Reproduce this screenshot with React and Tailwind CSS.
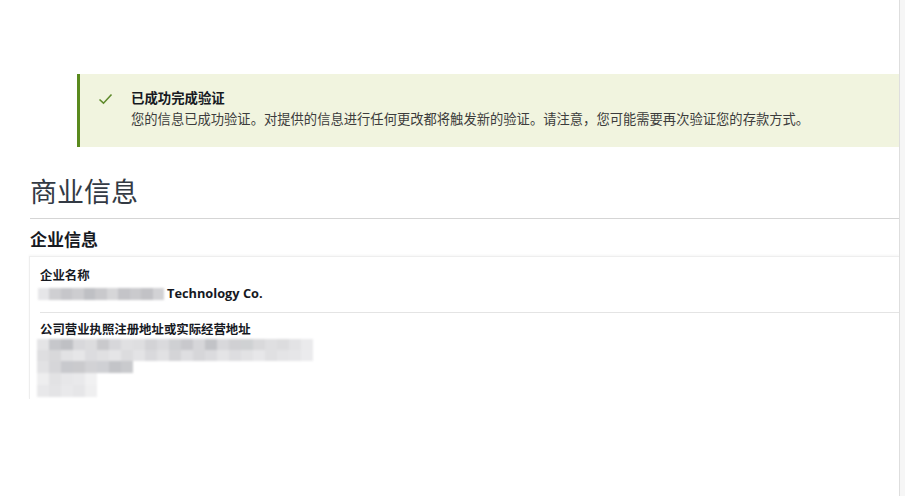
import React from "react";

const CJK = { fontFamily: '"Noto Sans CJK SC", "Noto Sans", sans-serif' };
const MIX = { fontFamily: '"Open Sans", "Noto Sans CJK SC", sans-serif' };

function Mosaic({ rows }) {
  return (
    <div className="flex flex-col blur-[1.2px]">
      {rows.map((r, i) => (
        <div key={i} className="flex" style={{ height: r.h }}>
          {r.c.map((c, j) => (
            <div key={j} style={{ width: r.w || 12, background: c }} />
          ))}
        </div>
      ))}
    </div>
  );
}

export default function App() {
  return (
    <div className="flex h-[496px] w-[905px] bg-white overflow-hidden" style={CJK}>
      <div className="flex-1 flex flex-col pt-[74px]">
        <div className="ml-[77px] h-[73px] border-l-[3px] border-[#5a8a1e] bg-[#f1f4df] flex items-start pl-[18px] pt-[13px]">
          <svg width="15" height="12" viewBox="0 0 15 12" className="mr-[18px] shrink-0 mt-[6px]">
            <path d="M1.5 6.5 L5.5 10.2 L13.5 1.5" fill="none" stroke="#5f8a2c" strokeWidth="1.6" />
          </svg>
          <div className="flex flex-col">
            <div className="text-[13.4px] leading-[20px] font-bold text-[#16191f]">已成功完成验证</div>
            <div className="text-[13.3px] leading-[20px] text-[#3c3c3c] mt-[2px]">
              您的信息已成功验证。对提供的信息进行任何更改都将触发新的验证。请注意，您可能需要再次验证您的存款方式。
            </div>
          </div>
        </div>

        <h1 className="ml-[30px] mt-[28px] text-[27px] leading-[32px] text-[#333a44] font-normal">商业信息</h1>
        <div className="ml-[30px] mt-[11px] border-t border-[#d5d5d5]" />
        <h2 className="ml-[30px] mt-[9px] text-[17px] leading-[22px] font-bold text-[#16191f]">企业信息</h2>

        <div className="ml-[29px] mt-[6px] border-l border-t border-[#eeeeee] shadow-[0_-1px_2px_rgba(0,0,0,0.04)] pl-[10px] pt-[10px] h-[143px]">
          <div className="text-[12.4px] leading-[16px] font-bold text-[#16191f]">企业名称</div>
          <div className="flex items-center mt-[3px] h-[16px]">
            <div className="ml-[-2px] w-[126px]">
              <Mosaic
                rows={[
                  {
                    h: 12,
                    w: 12,
                    c: ["#e6e6e8", "#cfcfd2", "#c6c6ca", "#cdcdd0", "#bfc0c4", "#c9c9cc", "#d6d6d8", "#c4c4c8", "#cacacd", "#c2c2c6", "#d2d2d5"],
                  },
                ]}
              />
            </div>
            <span className="ml-[3px] text-[12.8px] font-bold text-[#16191f]" style={MIX}>Technology Co.</span>
          </div>
          <div className="mt-[10px] border-t border-[#e4e4e4]" />
          <div className="mt-[8px] text-[12.4px] leading-[16px] font-bold text-[#16191f]">公司营业执照注册地址或实际经营地址</div>
          <div className="mt-[2px] ml-[-3px]">
            <Mosaic
              rows={[
                {
                  h: 11,
                  c: ["#e4e4e6", "#c6c7cb", "#bfc0c4", "#d8d8db", "#dcdcde", "#c9c9cc", "#d7d7da", "#e0e0e2", "#dedee0", "#d3d3d6", "#dadadd", "#cfd0d3", "#c8c8cc", "#d6d6d9", "#c2c3c7", "#d8d8db", "#d0d0d3", "#cfd1d3", "#d9d9db", "#dfdfe1", "#dcdcde", "#e3e3e5", "#eaeaec"],
                },
                {
                  h: 11,
                  c: ["#dedee0", "#d8d8da", "#e2e2e4", "#e6e6e8", "#dcdcdf", "#e0e0e2", "#e5e5e7", "#dcdcde", "#e3e3e5", "#d9d9dc", "#e1e1e3", "#d4d4d7", "#dedee1", "#d6d6d9", "#dbdbde", "#e4e4e6", "#dddde0", "#e2e2e4", "#e7e7e9", "#e0e0e2", "#e4e4e6", "#e6e6e8", "#ebebed"],
                },
                { h: 12, c: ["#e2e2e4", "#d6d6d9", "#c8c9cd", "#cacacd", "#d2d2d5", "#cfd0d4", "#c3c4c8", "#c9cacd"] },
                { h: 12, c: ["#eeeeef", "#e2e2e4", "#e7e7e9", "#e9e9eb", "#f1f1f2"] },
                { h: 12, c: ["#e8e8ea", "#e4e4e6", "#e9e9eb", "#e6e6e8", "#efeff0"] },
              ]}
            />
          </div>
        </div>
      </div>
      <div className="w-[6px] border-l border-[#dedede] bg-[#f6f6f6]" />
    </div>
  );
}
